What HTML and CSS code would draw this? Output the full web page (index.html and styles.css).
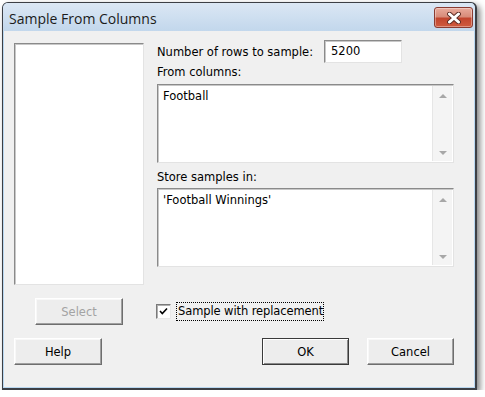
FILE: index.html
```html
<!DOCTYPE html>
<html>
<head>
<meta charset="utf-8">
<link rel="stylesheet" href="styles.css">
</head>
<body>
<div class="window">
  <div class="titlebar">
    <span class="title">Sample From Columns</span>
    <div class="close">
      <svg width="16" height="12" viewBox="0 0 16 12">
        <path d="M3.5 2 L12.5 10 M12.5 2 L3.5 10" stroke="#5a2a22" stroke-width="4.8" stroke-linecap="round" fill="none"/>
        <path d="M3.5 2 L12.5 10 M12.5 2 L3.5 10" stroke="#ffffff" stroke-width="3" stroke-linecap="round" fill="none"/>
      </svg>
    </div>
  </div>
  <div class="client">
    <div class="main">
      <div class="varlist"></div>
      <div class="right">
        <div class="row1">
          <span class="lbl-rows">Number of rows to sample:</span>
          <div class="input">5200</div>
        </div>
        <div class="lbl lbl-from">From columns:</div>
        <div class="textarea">
          <div class="ta-text">Football</div>
          <div class="scroll">
            <span class="arrow up"></span>
            <span class="arrow down"></span>
          </div>
        </div>
        <div class="lbl lbl-store">Store samples in:</div>
        <div class="textarea">
          <div class="ta-text">'Football Winnings'</div>
          <div class="scroll">
            <span class="arrow up"></span>
            <span class="arrow down"></span>
          </div>
        </div>
      </div>
    </div>
    <div class="row2">
      <div class="btn btn-select disabled">Select</div>
      <div class="check">
        <span class="box">
          <svg width="9" height="9" viewBox="0 0 9 9"><path d="M1 4 L3.3 6.5 L8 1.5" stroke="#000" stroke-width="1.6" fill="none"/></svg>
        </span>
        <span class="check-label">Sample with replacement</span>
      </div>
    </div>
    <div class="row3">
      <div class="btn btn-help">Help</div>
      <div class="btn btn-ok">OK</div>
      <div class="btn btn-cancel">Cancel</div>
    </div>
  </div>
</div>
</body>
</html>
```

FILE: styles.css
```css
html, body {
  margin: 0;
  padding: 0;
  background: #ffffff;
}

.window {
  position: relative;
  margin: 2px 0 0 2px;
  width: 475px;
  height: 388px;
  box-sizing: border-box;
  border: 1px solid #3c3f45;
  border-right-width: 2px;
  border-bottom-width: 2px;
  border-radius: 6px 6px 0 0;
  background: #b9d7f0;
  box-shadow: 3px 3px 6px rgba(0, 0, 0, 0.5);
  display: flex;
  flex-direction: column;
  font-family: "DejaVu Sans", sans-serif;
  font-size: 11.5px;
  color: #000;
}

.titlebar {
  height: 28px;
  flex: none;
  display: flex;
  align-items: flex-start;
  justify-content: space-between;
  background: linear-gradient(#dbe7f4, #c2d7ec);
  border-radius: 5px 5px 0 0;
}

.title {
  font-family: "Open Sans", "Noto Sans", sans-serif;
  font-size: 14px;
  line-height: 20px;
  padding: 6px 0 0 6px;
  color: #1b1b1b;
}

.close {
  margin: 4px 2px 0 0;
  width: 39px;
  height: 21px;
  box-sizing: border-box;
  border: 1px solid #8a3b31;
  border-radius: 3px;
  background: linear-gradient(#e9ab9c 0%, #d88c7a 45%, #c2452e 55%, #cf5b3f 100%);
  box-shadow: inset 0 0 0 1px rgba(255, 255, 255, 0.35);
  display: flex;
  align-items: center;
  justify-content: center;
}

.close svg {
  display: block;
}

.client {
  margin-left: 1px;
  width: 470px;
  height: 356px;
  box-sizing: border-box;
  background: #f0f0f0;
  padding: 9px 0 0 10px;
}

.main {
  display: flex;
  gap: 13px;
  height: 245px;
}

.varlist {
  margin-top: 3px;
  width: 130px;
  height: 242px;
  box-sizing: border-box;
  background: #fff;
  border: 1px solid;
  border-color: #8a8a8a #e3e3e3 #e3e3e3 #8a8a8a;
  box-shadow: inset 1px 1px 0 #c8c8c8;
}

.right {
  width: 297px;
  display: flex;
  flex-direction: column;
}

.row1 {
  display: flex;
  align-items: center;
  height: 23px;
}

.lbl-rows {
  width: 167px;
}

.input {
  width: 78px;
  height: 23px;
  box-sizing: border-box;
  background: #fff;
  border: 1px solid;
  border-color: #8a8a8a #e3e3e3 #e3e3e3 #8a8a8a;
  box-shadow: inset 1px 1px 0 #c8c8c8;
  padding: 0 0 0 6px;
  line-height: 21px;
}

.lbl {
  line-height: 18px;
}

.lbl-from {
  height: 21px;
}

.lbl-store {
  height: 25px;
  box-sizing: border-box;
  padding-top: 5px;
}

.textarea {
  height: 79px;
  box-sizing: border-box;
  background: #fff;
  border: 1px solid;
  border-color: #8a8a8a #e3e3e3 #e3e3e3 #8a8a8a;
  box-shadow: inset 1px 1px 0 #c8c8c8;
  display: flex;
}

.ta-text {
  flex: 1;
  padding: 3px 0 0 5px;
  line-height: 16px;
}

.scroll {
  width: 19px;
  margin: 1px 1px 1px 0;
  background: #f4f4f4;
  border-left: 1px solid #e6e6e6;
  display: flex;
  flex-direction: column;
  justify-content: space-between;
  align-items: center;
  padding: 8px 0 6px;
}

.arrow {
  width: 0;
  height: 0;
  border-left: 4px solid transparent;
  border-right: 4px solid transparent;
}

.arrow.up {
  border-bottom: 4px solid #a7a7a7;
}

.arrow.down {
  border-top: 4px solid #a7a7a7;
}

.row2 {
  margin-top: 13px;
  height: 27px;
  display: flex;
  align-items: center;
}

.btn {
  height: 27px;
  box-sizing: border-box;
  background: #ededed;
  border: 1px solid;
  border-color: #ffffff #6e6e6e #6e6e6e #ffffff;
  box-shadow: inset -1px -1px 0 #a0a0a0, inset 1px 1px 0 #f8f8f8;
  display: flex;
  align-items: center;
  justify-content: center;
  font-size: 11.5px;
}

.btn-select {
  margin-left: 21px;
  width: 88px;
}

.disabled {
  color: #a3a3a3;
}

.check {
  margin-left: 33px;
  display: flex;
  align-items: center;
}

.box {
  width: 15px;
  height: 15px;
  box-sizing: border-box;
  background: #fff;
  border: 1px solid;
  border-color: #7a7a7a #e8e8e8 #e8e8e8 #7a7a7a;
  box-shadow: inset 1px 1px 0 #b0b0b0;
  display: flex;
  align-items: center;
  justify-content: center;
}

.box svg {
  display: block;
}

.check-label {
  margin-left: 5px;
  padding: 1px 0 1px 1px;
  border: 1px dotted #000;
  line-height: 15px;
  letter-spacing: -0.1px;
}

.row3 {
  margin-top: 13px;
  height: 27px;
  display: flex;
}

.btn-help {
  width: 88px;
}

.btn-ok {
  margin-left: 160px;
  width: 87px;
  border-color: #3a3a3a;
  box-shadow: inset 1px 1px 0 #ffffff, inset -1px -1px 0 #8a8a8a;
}

.btn-cancel {
  margin-left: 18px;
  width: 87px;
}
```
